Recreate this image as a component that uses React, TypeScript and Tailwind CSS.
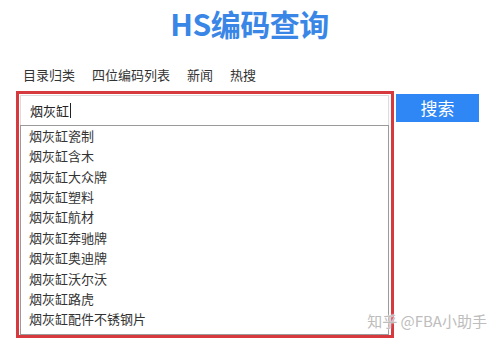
import React from "react";

const nav = ["目录归类", "四位编码列表", "新闻", "热搜"];

const suggestions = [
  "烟灰缸瓷制",
  "烟灰缸含木",
  "烟灰缸大众牌",
  "烟灰缸塑料",
  "烟灰缸航材",
  "烟灰缸奔驰牌",
  "烟灰缸奥迪牌",
  "烟灰缸沃尔沃",
  "烟灰缸路虎",
  "烟灰缸配件不锈钢片",
];

export default function App() {
  return (
    <div
      className="relative w-[499px] h-[343px] overflow-hidden bg-white text-[#222]"
      style={{ fontFamily: '"Microsoft YaHei", "Noto Sans CJK SC", "Noto Sans", sans-serif' }}
    >
      {/* Title */}
      <h1 className="pt-[4px] h-[50px] text-center text-[30px] leading-[38px] font-bold text-[#3a86e6] tracking-[-0.5px]">
        HS编码查询
      </h1>

      {/* Nav links */}
      <nav className="mt-[16px] pl-[23px] flex gap-[17px] text-[13px] leading-[18px] text-[#333]">
        {nav.map((n) => (
          <span key={n}>{n}</span>
        ))}
      </nav>

      {/* Search row */}
      <div className="mt-[7px] pl-[16px] flex items-start">
        <div className="w-[378px] h-[247px] border-[3px] border-[#d63a3f] pt-[1px] pl-[1px] pr-[2px] flex flex-col">
          <div className="h-[30px] border border-[#dcdcdc] border-b-0 pl-[9px] flex items-center text-[13px]">
            <span>烟灰缸</span>
            <span className="ml-[1px] w-[1px] h-[15px] bg-[#222]" />
          </div>
          <ul className="h-[211px] border border-[#9a9a9a]">
            {suggestions.map((s) => (
              <li key={s} className="pl-[8px] h-[20.4px] leading-[19px] text-[13px] text-[#333]">
                {s}
              </li>
            ))}
          </ul>
        </div>
        <button className="ml-[2px] mt-[3px] w-[83px] h-[28px] bg-[#2f86f5] text-white text-[17px] leading-[28px]">
          搜索
        </button>
      </div>

      {/* Watermark */}
      <div
        className="absolute right-[12px] bottom-[13px] text-[15px] leading-[18px] text-[#bdbdbd]"
        style={{ textShadow: "0 0 2px #fff, 0 0 1px #fff" }}
      >
        知乎 @FBA小助手
      </div>
    </div>
  );
}
